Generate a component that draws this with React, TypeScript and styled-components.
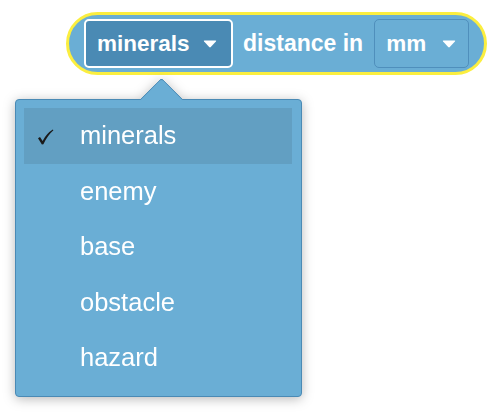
import React from 'react';
import styled, { createGlobalStyle } from 'styled-components';

const GlobalStyle = createGlobalStyle`
  html, body {
    margin: 0;
    padding: 0;
    background: #fff;
  }
  body {
    font-family: 'Liberation Sans', Arial, sans-serif;
  }
`;

const options = ['minerals', 'enemy', 'base', 'obstacle', 'hazard'];
const selected = 'minerals';

const Caret = () => (
  <svg width="14" height="8" viewBox="0 0 14 8">
    <path d="M1.5 0.5 H12.5 Q13.8 0.5 12.9 1.5 L7.8 7 Q7 7.8 6.2 7 L1.1 1.5 Q0.2 0.5 1.5 0.5 Z" fill="#fff" />
  </svg>
);

const CheckMark = () => (
  <svg width="17" height="16" viewBox="0 0 17 16">
    <path d="M1 9.2 L3 8 L5.6 12 Q9.5 4.5 15.8 0.6 L16.4 1.3 Q10.5 6.5 6.4 15.2 L4.9 15.4 Z" fill="#1a1a1a" />
  </svg>
);

const App: React.FC = () => {
  return (
    <>
      <GlobalStyle />
      <Page>
        <Block>
          <Field selected>
            <span>minerals</span>
            <Caret />
          </Field>
          <Label>distance in</Label>
          <Field>
            <span>mm</span>
            <Caret />
          </Field>
        </Block>
        <Menu>
          <MenuArrow />
          {options.map((opt) => (
            <MenuItem key={opt} active={opt === selected}>
              <Check>{opt === selected && <CheckMark />}</Check>
              {opt}
            </MenuItem>
          ))}
        </Menu>
      </Page>
    </>
  );
};

const Page = styled.div`
  display: flex;
  flex-direction: column;
  align-items: flex-start;
  padding-top: 12px;
  width: 498px;
  height: 414px;
  box-sizing: border-box;
`;

const Block = styled.div`
  display: flex;
  align-items: center;
  margin-left: 66px;
  height: 63px;
  box-sizing: border-box;
  padding: 0 15px;
  background: #6aaed5;
  border: 3px solid #fbee3f;
  border-radius: 32px;
`;

const Field = styled.div<{ selected?: boolean }>`
  display: flex;
  align-items: center;
  justify-content: space-between;
  box-sizing: border-box;
  height: 49px;
  width: ${(props) => (props.selected ? '149px' : '95px')};
  padding: ${(props) => (props.selected ? '0 14px 0 11px' : '0 12px 0 11px')};
  border-radius: 5px;
  border: ${(props) => (props.selected ? '2px solid #fff' : '1px solid #4f8fbc')};
  background: ${(props) => (props.selected ? '#4a8ab4' : '#6aaed5')};
  color: #fff;
  font-size: 22.5px;
  font-weight: bold;
  svg {
    margin-top: 1px;
  }
`;

const Label = styled.span`
  margin: 0 11px 0 10px;
  color: #fff;
  font-size: 23px;
  font-weight: bold;
`;

const Menu = styled.div`
  position: relative;
  margin: 24px 0 0 15px;
  width: 287px;
  height: 298px;
  box-sizing: border-box;
  padding: 8px 9px 0 8px;
  background: #6aaed5;
  border: 1px solid #4a8ab5;
  border-radius: 4px;
  filter: drop-shadow(0 2px 6px rgba(0, 0, 0, 0.28));
`;

const MenuArrow = styled.div`
  position: absolute;
  left: 130px;
  top: -16px;
  width: 31px;
  height: 31px;
  box-sizing: border-box;
  background: #6aaed5;
  border-top: 1px solid #4a8ab5;
  border-left: 1px solid #4a8ab5;
  border-top-left-radius: 4px;
  transform: rotate(45deg);
`;

const MenuItem = styled.div<{ active?: boolean }>`
  position: relative;
  z-index: 1;
  display: flex;
  align-items: center;
  height: 55.5px;
  padding-left: 13px;
  background: ${(props) => (props.active ? '#629fc2' : 'transparent')};
  color: #fff;
  font-size: 25.5px;
`;

const Check = styled.span`
  display: flex;
  align-items: center;
  width: 43px;
  svg {
    margin-top: 2px;
  }
`;

export default App;
